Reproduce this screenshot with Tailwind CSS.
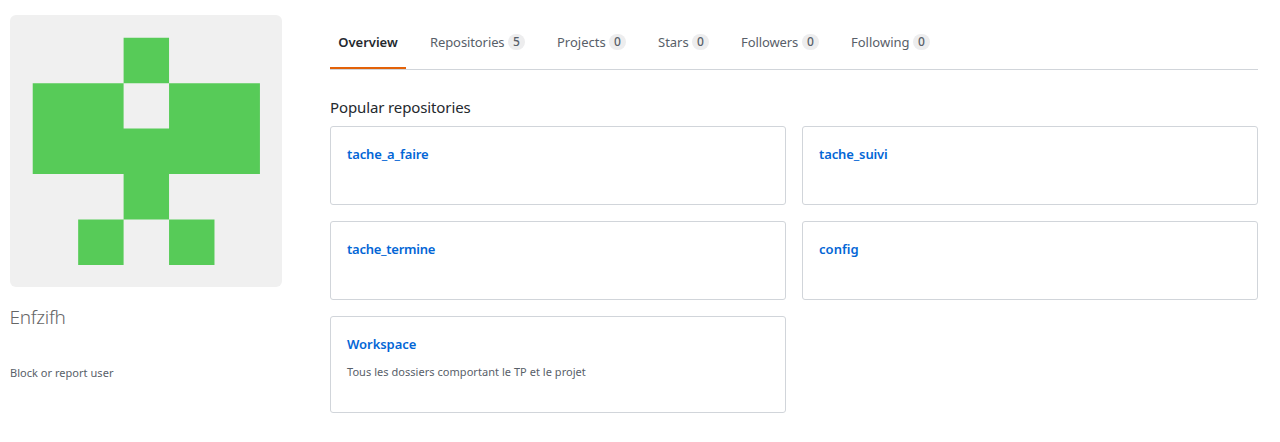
<!DOCTYPE html>
<html lang="en"><head><meta charset="utf-8"><title>Enfzifh</title>
<script src="https://cdn.jsdelivr.net/npm/@tailwindcss/browser@4"></script></head>
<body class="overflow-hidden bg-white font-['Noto_Sans',sans-serif] text-[#24292e]">
<div class="flex h-[442px] pr-[22px] pl-[10px]">
  <aside class="w-[272px] shrink-0 pt-[15px]">
    <svg class="block rounded-md" width="272" height="272" viewBox="0 0 419 419"><path fill="#f0f0f0" d="M0 0h420v420H0z"/><path fill="#57cb58" fill-rule="evenodd" d="M175 35h70v70h140v140H245v70h70v70h-70v-70h-70v70h-70v-70h70v-70H35V105h140zM175 105v70h70v-70z"/></svg>
    <h1 class="mt-[18px] ml-[-0.5px] text-[19px] leading-6 font-light tracking-[-0.3px] text-[#666]">Enfzifh</h1>
    <a class="mt-[35px] block text-[11px] leading-[18px] tracking-[0.03px] text-[#586069]">Block or report user</a>
  </aside>
  <main class="ml-[48px] flex-1">
    <nav class="flex h-[70px] gap-4 border-b border-[#d1d5da] pt-4 text-[13px] leading-[21px] text-[#586069]">
      <a class="h-[53px] w-[76px] border-b-2 border-[#e36209] pt-4 text-center font-semibold text-[#24292e]">Overview</a>
      <a class="flex w-[111px] justify-between px-2 pt-4"><span class="tracking-[-0.1px]">Repositories</span><span class="mt-[2px] h-4 w-[17px] rounded-full bg-[#ededee] text-center text-[12px] leading-4 font-medium">5</span></a>
      <a class="flex w-[85px] justify-between px-2 pt-4"><span>Projects</span><span class="mt-[2px] h-4 w-[17px] rounded-full bg-[#ededee] text-center text-[12px] leading-4 font-medium">0</span></a>
      <a class="flex w-[67px] justify-between px-2 pt-4"><span>Stars</span><span class="mt-[2px] h-4 w-[17px] rounded-full bg-[#ededee] text-center text-[12px] leading-4 font-medium">0</span></a>
      <a class="flex w-[94px] justify-between px-2 pt-4"><span class="tracking-[-0.1px]">Followers</span><span class="mt-[2px] h-4 w-[17px] rounded-full bg-[#ededee] text-center text-[12px] leading-4 font-medium">0</span></a>
      <a class="flex w-[95px] justify-between px-2 pt-4">Following<span class="mt-[2px] h-4 w-[17px] rounded-full bg-[#ededee] text-center text-[12px] leading-4 font-medium">0</span></a>
    </nav>
    <h2 class="mt-[25px] text-[15px] leading-6 tracking-[-0.12px]">Popular repositories</h2>
    <div class="mt-[7px] grid grid-cols-2 gap-4 text-[13px] leading-[21px] font-semibold tracking-[-0.12px] text-[#0366d6]">
      <div class="h-[79px] rounded-[3px] border border-[#d1d5da] px-4 pt-[17px]">tache_a_faire</div>
      <div class="h-[79px] rounded-[3px] border border-[#d1d5da] px-4 pt-[17px]">tache_suivi</div>
      <div class="h-[79px] rounded-[3px] border border-[#d1d5da] px-4 pt-[17px] tracking-[-0.25px]">tache_termine</div>
      <div class="h-[79px] rounded-[3px] border border-[#d1d5da] px-4 pt-[17px] tracking-[0.05px]">config</div>
      <div class="h-[97px] rounded-[3px] border border-[#d1d5da] px-4 pt-[17px] tracking-[-0.05px]">Workspace
        <p class="mt-2 text-[11px] leading-[18px] font-normal tracking-[0.04px] text-[#586069]">Tous les dossiers comportant le TP et le projet</p>
      </div>
    </div>
  </main>
</div></body></html>
